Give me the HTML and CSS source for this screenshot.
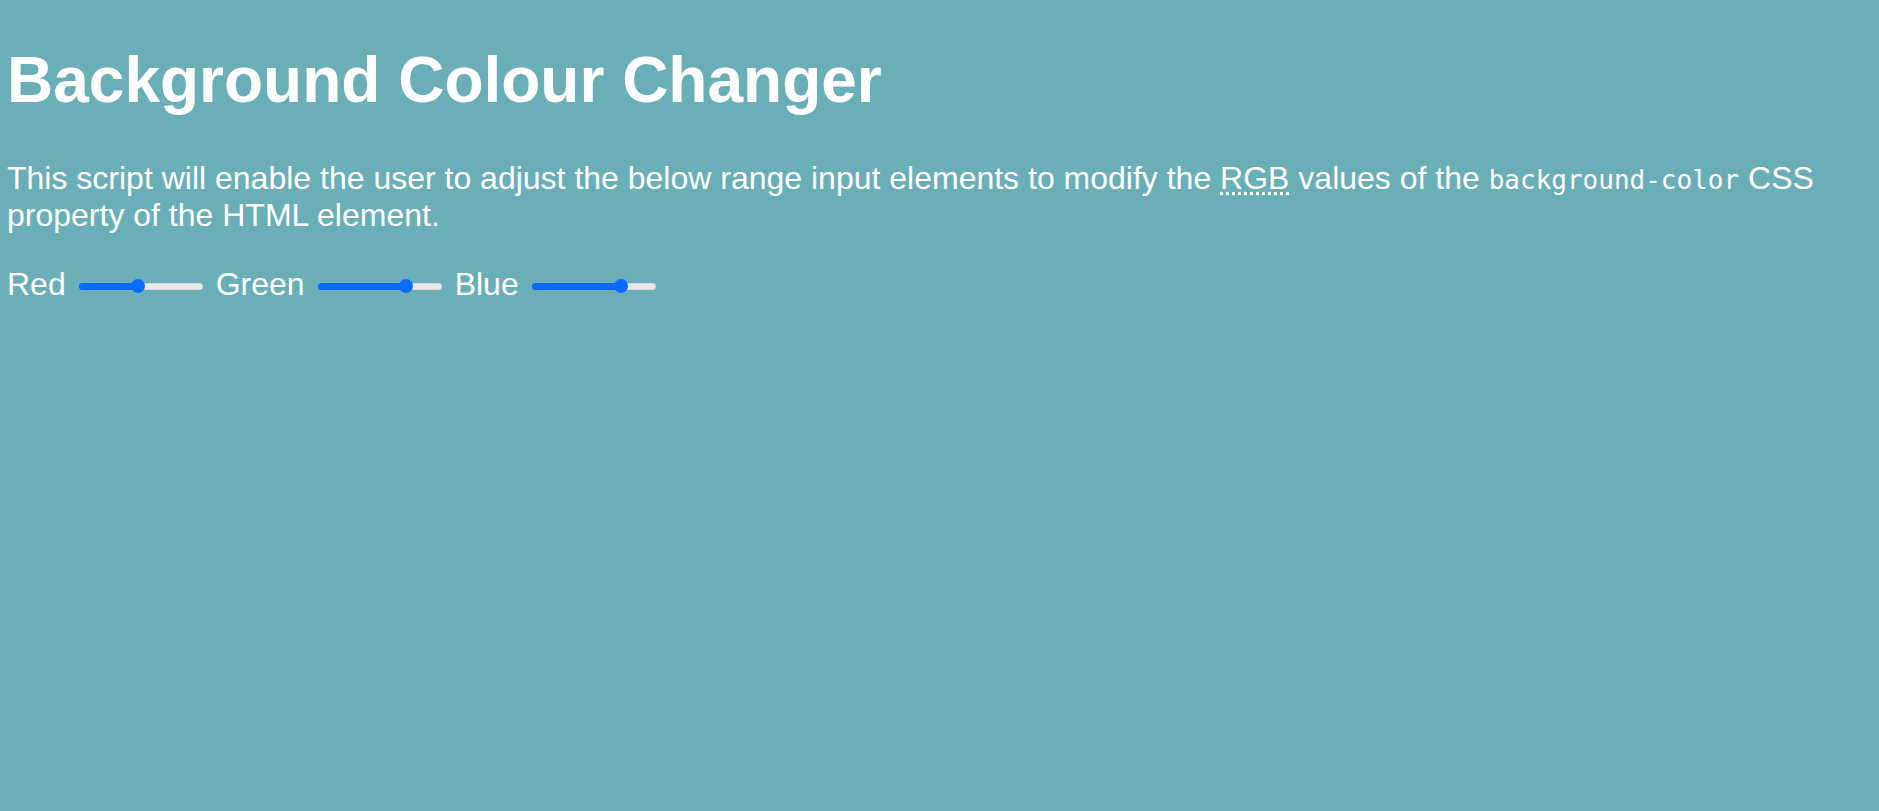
FILE: index.html
```html
<!DOCTYPE html>
<html lang="en">
<head>
<meta charset="utf-8">
<title>Background Colour Changer</title>
<link rel="stylesheet" href="styles.css">
</head>
<body class="page">
<h1 class="title">Background Colour Changer</h1>
<p class="intro">This script will enable the user to adjust the below range input elements to modify the <abbr class="abbr" title="Red Green Blue">RGB</abbr> values of the <code class="code">background-color</code> CSS property of the HTML element.</p>
<div class="controls">
  <label class="label" for="red">Red</label>
  <input class="slider" id="red" type="range" min="0" max="255" value="121" style="--fill: 47.6%">
  <label class="label" for="green">Green</label>
  <input class="slider" id="green" type="range" min="0" max="255" value="189" style="--fill: 72.6%">
  <label class="label" for="blue">Blue</label>
  <input class="slider" id="blue" type="range" min="0" max="255" value="191" style="--fill: 73%">
</div>
</body>
</html>
```
FILE: styles.css
```css
html {
  background: #6aafb8;
}
.page {
  margin: 0 7px;
  color: #ffffff;
  font-family: "Liberation Sans", Arial, Helvetica, sans-serif;
  font-size: 32px;
}
.title {
  font-size: 64px;
  font-weight: bold;
  margin: 43px 0;
}
.intro {
  margin: 32px 0;
}
.abbr {
  text-decoration: underline dotted;
  text-underline-offset: 3px;
}
.code {
  font-family: "DejaVu Sans Mono", "Liberation Mono", monospace;
  font-size: 26px;
}
.controls {
  display: flex;
  align-items: center;
  gap: 13px;
}
.label {
  line-height: 1.15;
}
.slider {
  -webkit-appearance: none;
  appearance: none;
  width: 124px;
  height: 16px;
  margin: 4px 0 0;
  background: transparent;
}
.slider::-webkit-slider-runnable-track {
  height: 7px;
  border-radius: 4px;
  background: linear-gradient(to right, #0a6cff var(--fill), #e9e9e9 var(--fill));
  box-shadow: inset 0 0 0 1px rgba(0, 0, 0, 0.08);
}
.slider::-webkit-slider-thumb {
  -webkit-appearance: none;
  appearance: none;
  width: 14px;
  height: 14px;
  border-radius: 50%;
  background: #0a6cff;
  margin-top: -3.5px;
}
```
